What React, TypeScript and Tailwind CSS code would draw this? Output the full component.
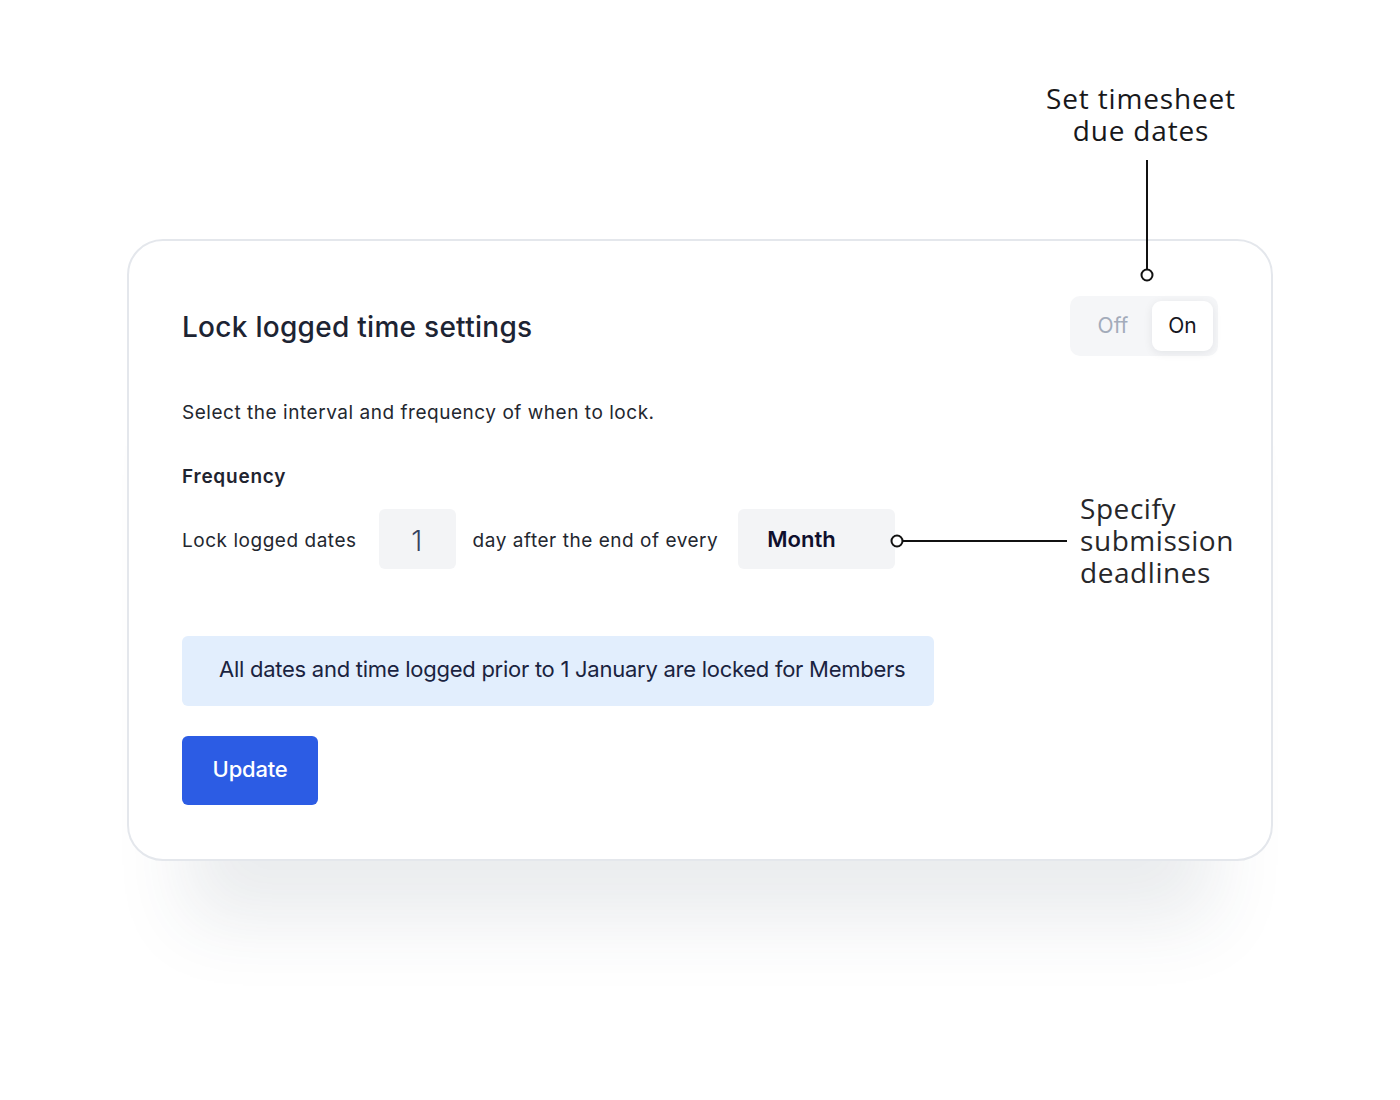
import React, { useState } from 'react';

const sans = { fontFamily: 'Inter, "Noto Sans", sans-serif' };
const callout = { fontFamily: '"Open Sans", Inter, sans-serif' };

function Toggle() {
  const [on, setOn] = useState(true);
  return (
    <div className="flex h-[60px] w-[148px] items-center rounded-[10px] bg-[#f5f6f8] p-[5px] pl-[4px]">
      <button
        onClick={() => setOn(false)}
        className={`flex h-[50px] flex-1 items-center justify-center rounded-[9px] text-[21px] ${
          on ? 'text-[#a3abba]' : 'bg-white text-[#15161f] shadow-[0_2px_10px_rgba(15,23,42,0.08)]'
        }`}
      >
        Off
      </button>
      <button
        onClick={() => setOn(true)}
        className={`flex h-[50px] w-[61px] items-center justify-center rounded-[9px] text-[21px] ${
          on ? 'bg-white text-[#15161f] shadow-[0_2px_10px_rgba(15,23,42,0.08)]' : 'text-[#a3abba]'
        }`}
      >
        On
      </button>
    </div>
  );
}

export default function App() {
  return (
    <div className="h-[1100px] w-full bg-white pl-[127px] pt-[239px]" style={sans}>
      <div className="relative h-[622px] w-[1146px] rounded-[36px] border-2 border-[#e4e7ec] bg-white px-[53px] pb-[54px] pt-[55px] shadow-[0_120px_70px_-60px_rgba(51,65,85,0.1)]">
        {/* callout: due dates */}
        <div className="absolute left-[874px] top-[-159px] w-[276px] text-center text-[28px] leading-[32px] tracking-[0.03em] text-[#18181b]" style={callout}>
          <div>Set timesheet</div>
          <div>due dates</div>
        </div>
        <svg className="absolute left-[1006px] top-[-81px]" width="24" height="124" viewBox="0 0 24 124">
          <line x1="12" y1="0" x2="12" y2="109" stroke="#111" strokeWidth="2" />
          <circle cx="12" cy="115" r="5.5" fill="white" stroke="#111" strokeWidth="2" />
        </svg>

        {/* callout: deadlines */}
        <svg className="absolute left-[758px] top-[288px]" width="182" height="24" viewBox="0 0 182 24">
          <line x1="16" y1="12" x2="180" y2="12" stroke="#111" strokeWidth="2" />
          <circle cx="10" cy="12" r="5.5" fill="white" stroke="#111" strokeWidth="2" />
        </svg>
        <div className="absolute left-[951px] top-[251px] text-[28px] leading-[32px] tracking-[0.02em] text-[#27272a]" style={callout}>
          <div>Specify</div>
          <div>submission</div>
          <div>deadlines</div>
        </div>

        <div className="flex items-center justify-between">
          <h1 className="mt-[2px] text-[28px] font-medium tracking-[0.01em] text-[#1d2433]">Lock logged time settings</h1>
          <Toggle />
        </div>

        <p className="mt-[43px] text-[19px] leading-[28px] tracking-[0.028em] text-[#23272f]">
          Select the interval and frequency of when to lock.
        </p>

        <h2 className="mt-[36px] text-[19px] font-semibold leading-[28px] tracking-[0.04em] text-[#1f2430]">Frequency</h2>

        <div className="mt-[18px] flex h-[60px] items-center text-[19px] tracking-[0.028em] text-[#23272f]">
          <span className="pt-[5px]">Lock logged dates</span>
          <div className="ml-[22px] flex h-[60px] w-[77px] items-center justify-center rounded-[6px] bg-[#f3f4f6] pt-[3px] text-[28px] font-light text-[#34425e]">
            1
          </div>
          <span className="ml-[17px] pt-[5px]">day after the end of every</span>
          <div className="ml-[20px] flex h-[60px] w-[157px] items-center rounded-[6px] bg-[#f3f4f6] pl-[29px] text-[22px] font-semibold tracking-normal text-[#0f0f2d]">
            Month
          </div>
        </div>

        <div className="mt-[67px] flex h-[70px] w-[752px] items-center rounded-[6px] bg-[#e2eefd] pb-[4px] pl-[37px] text-[22px] tracking-[-0.012em] text-[#1a2340]">
          All dates and time logged prior to 1 January are locked for Members
        </div>

        <button className="mt-[30px] flex h-[69px] w-[136px] items-center justify-center rounded-[6px] bg-[#2c5ce4] pb-[2px] text-[22px] font-medium tracking-[-0.01em] text-white">
          Update
        </button>
      </div>
    </div>
  );
}
